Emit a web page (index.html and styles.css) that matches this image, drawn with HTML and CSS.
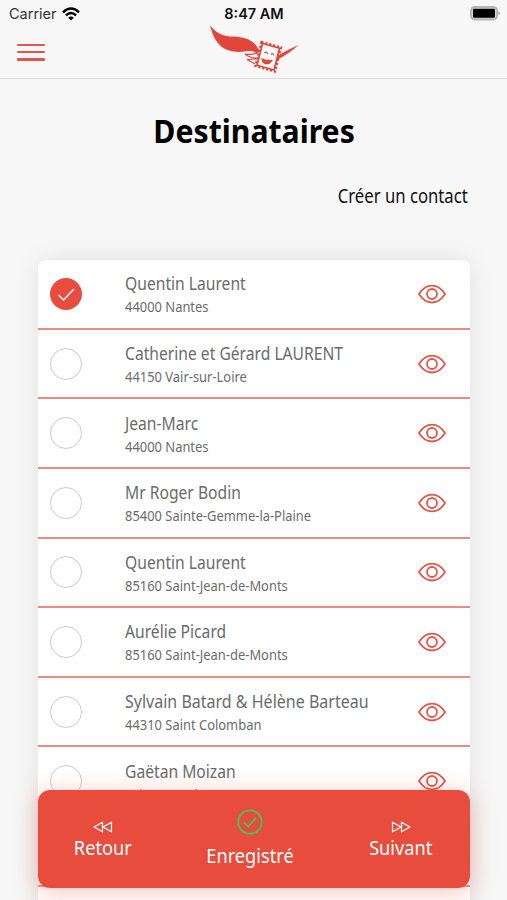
FILE: index.html
```html
<!DOCTYPE html>
<html lang="fr">
<head>
<meta charset="utf-8">
<title>Destinataires</title>
<link rel="stylesheet" href="styles.css">
</head>
<body>
<svg width="0" height="0" class="defs">
  <symbol id="eye" viewBox="0 0 28 20"><path d="M1 10C8-1.300 20-1.300 27 10C20 21.300 8 21.300 1 10Z"/><circle cx="14" cy="10" r="5"/></symbol>
</svg>
<div class="screen">
  <header class="top">
    <div class="status">
      <div class="carrier"><span>Carrier</span>
        <svg class="wifi" viewBox="0 0 18 14"><path d="M1 5.300Q9-2.300 17 5.300" /><path d="M3.900 8.300Q9 3.700 14.100 8.300"/><path class="dot" d="M6.200 10.700Q9 8.300 11.800 10.700L9 13.600Z"/></svg>
      </div>
      <div class="clock">8:47 AM</div>
      <svg class="battery" viewBox="0 0 31 15"><rect x="1" y="1" width="26" height="12.500" rx="3.500" fill="#d8d8d8" stroke="#b5b5b5" stroke-width="1.800"/><rect x="3" y="2.800" width="22" height="9" rx="1" fill="#000"/><path d="M28.300 5L30.500 7.300L28.300 9.600Z" fill="#aaa"/></svg>
    </div>
    <div class="nav">
      <div class="burger"><i></i><i></i><i></i></div>
      <svg class="logo" viewBox="0 0 92 54">
        <path class="fill" d="M2 3C7 10 13 13.500 22 14.500C36 14.500 46 17 51.500 29L49 32C45 27.500 40 29.500 34 29.800C14 31 6 20 2 3Z"/>
        <path class="line" d="M37 32Q43 33 49 31M37 32Q42 36 48 36M39 37.500L48 37M39 37.500L47 42"/>
        <path class="wing" d="M69 34Q79 28 90.500 23Q82 31 69 38Z"/>
        <path class="teeth" d="M53.500 20L73 25.500L67 49.500L47.500 44Z"/>
        <path class="stamp" d="M54.500 21.500L71.500 26.300L66 48L49 43.200Z"/>
        <path class="line" d="M56.500 31Q58.500 29 60 32M63 32.500Q65 30.500 66 33.500"/>
        <path class="fill" d="M53 36Q58 38.500 65 38Q60 45.500 54.500 40.500Z"/>
      </svg>
    </div>
  </header>
  <main>
    <h1><span>Destinataires</span></h1>
    <div class="create"><span>Créer un contact</span></div>
    <section class="card">
      <div class="row"><span class="check on"><svg viewBox="0 0 32 32"><path d="M8.500 17L13.500 22L24 11"/></svg></span><div class="info"><b>Quentin Laurent</b><small>44000 Nantes</small></div><svg class="eye"><use href="#eye"/></svg></div>
      <div class="row"><span class="check"></span><div class="info"><b>Catherine et Gérard LAURENT</b><small>44150 Vair-sur-Loire</small></div><svg class="eye"><use href="#eye"/></svg></div>
      <div class="row"><span class="check"></span><div class="info"><b>Jean-Marc</b><small>44000 Nantes</small></div><svg class="eye"><use href="#eye"/></svg></div>
      <div class="row"><span class="check"></span><div class="info"><b>Mr Roger Bodin</b><small>85400 Sainte-Gemme-la-Plaine</small></div><svg class="eye"><use href="#eye"/></svg></div>
      <div class="row"><span class="check"></span><div class="info"><b>Quentin Laurent</b><small>85160 Saint-Jean-de-Monts</small></div><svg class="eye"><use href="#eye"/></svg></div>
      <div class="row"><span class="check"></span><div class="info"><b>Aurélie Picard</b><small>85160 Saint-Jean-de-Monts</small></div><svg class="eye"><use href="#eye"/></svg></div>
      <div class="row"><span class="check"></span><div class="info"><b class="wide">Sylvain Batard &amp; Hélène Barteau</b><small>44310 Saint Colomban</small></div><svg class="eye"><use href="#eye"/></svg></div>
      <div class="row"><span class="check"></span><div class="info"><b>Gaëtan Moizan</b><small>Saint-Jean-de-Monts 85160</small></div><svg class="eye"><use href="#eye"/></svg></div>
      <div class="row"></div>
      <div class="row"></div>
    </section>
  </main>
  <footer class="actions">
    <div class="action back"><svg viewBox="0 0 20 12"><path d="M9.500 1.200V10.800L1 6ZM18.500 1.200V10.800L10 6Z"/></svg><span>Retour</span></div>
    <div class="action saved"><svg viewBox="0 0 26 26"><circle cx="13" cy="13" r="11.700"/><path d="M7 13.500L11.300 17.700L19 8.500"/></svg><span>Enregistré</span></div>
    <div class="action next"><svg viewBox="0 0 20 12"><path d="M1.500 1.200V10.800L10 6ZM10.500 1.200V10.800L19 6Z"/></svg><span>Suivant</span></div>
  </footer>
</div>
</body>
</html>
```
FILE: styles.css
```css
* { box-sizing: border-box; }
body { margin: 0; background: #f7f7f7; font-family: "Noto Sans", "Open Sans", sans-serif; }
.defs { display: block; }
.screen { position: relative; width: 507px; height: 900px; overflow: hidden; background: #f7f7f7; }
.top { height: 79px; border-bottom: 1px solid #dcdcdc; font-family: Inter, sans-serif; }
.status { height: 27px; display: grid; grid-template-columns: 1fr 80px 1fr; align-items: center; padding: 0 6px 0 9px; font-size: 14.5px; color: #333; }
.carrier { display: flex; align-items: center; gap: 6px; }
.carrier svg { margin-left: -1px; }
.wifi { width: 18px; height: 14px; fill: none; stroke: #000; stroke-width: 2.4; }
.wifi .dot { fill: #000; stroke: none; }
.clock { font-weight: 600; font-size: 14.5px; color: #111; text-align: center; white-space: nowrap; margin-left: -2px; }
.battery { width: 31px; height: 15px; justify-self: end; }
.nav { display: flex; }
.burger { width: 28px; margin: 17px 0 0 17px; display: flex; flex-direction: column; gap: 5px; }
.burger i { height: 2.2px; background: #e2574b; border-radius: 1px; }
.logo { width: 92px; height: 54px; margin: -5px 0 0 163px; }
.logo .fill, .logo .wing { fill: #e2463a; }
.logo .line { fill: none; stroke: #e2463a; stroke-width: 1.2; }
.logo .teeth { fill: none; stroke: #e2463a; stroke-width: 2.4; stroke-dasharray: 2.2 1.8; }
.logo .stamp { fill: #fff; stroke: #e2463a; stroke-width: 1.7; }
h1 { margin: 30px 0 0 1px; height: 44px; line-height: 44px; text-align: center; font-size: 33px; color: #000; }
h1 span { display: inline-block; transform: scaleX(.915); }
.create { margin: 28px 39px 0 0; height: 30px; line-height: 30px; text-align: right; font-size: 20px; color: #111; }
.create span { display: inline-block; transform: scaleX(.835); transform-origin: right; }
.card { margin: 49.2px 37px 0 38px; background: #fff; border-radius: 8px 8px 0 0; box-shadow: 0 0 26px rgba(0,0,0,.09); }
.row { height: 69.6px; display: grid; grid-template-columns: 32px minmax(0, 1fr) 28px; column-gap: 42px; align-items: center; padding: 0 24px 0 12px; border-bottom: 2px solid #ea8b80; }
.check { width: 32px; height: 32px; border: 1.5px solid #ccc; border-radius: 50%; }
.check.on { border: 0; background: #e74c3c; }
.check svg { display: block; fill: none; stroke: #fff; stroke-width: 1.5; }
.info { color: #6b6b6b; white-space: nowrap; padding: 1px 0 0 1px; }
.info b, .info small { display: block; transform-origin: left; }
.info b { font-weight: 400; font-size: 17.5px; line-height: 24px; transform: scaleX(.894); }
.info b.wide { transform: scaleX(.915); }
.info small { font-size: 13.5px; line-height: 22px; transform: translateY(1px) scaleX(.957); }
.eye { width: 28px; height: 20px; fill: none; stroke: #e2574b; stroke-width: 1.8; }
.actions { position: absolute; left: 38px; top: 790px; width: 432px; height: 98px; border-radius: 12px; background: #e74c3c; box-shadow: 0 4px 24px rgba(231,76,60,.35); color: #fff; display: grid; grid-template-columns: 130px 1fr 138px; }
.action { display: flex; flex-direction: column; align-items: center; font-size: 20px; line-height: 26px; }
.action span { display: inline-block; transform: scaleX(.91); }
.action svg { width: 20px; height: 12px; margin: 31px 0 2px; fill: none; stroke: #fff; stroke-width: 1.2; stroke-linejoin: round; }
.action.saved svg { width: 26px; height: 26px; margin: 19px 0 8px; stroke: #55b955; stroke-width: 2; }
```
